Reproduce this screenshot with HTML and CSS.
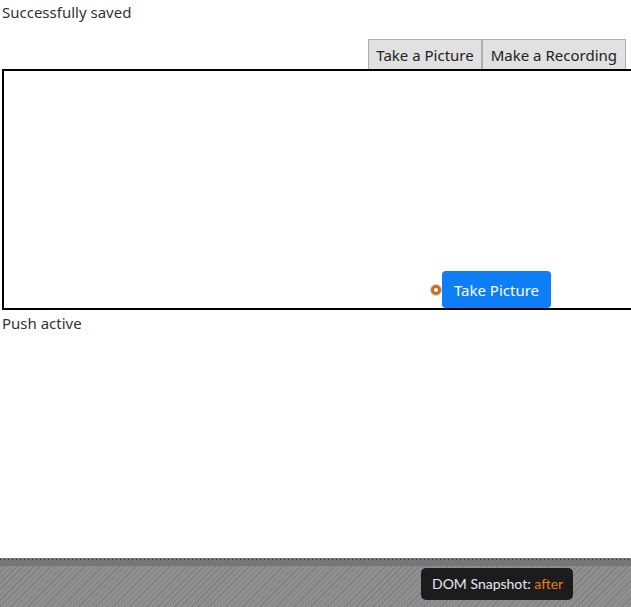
FILE: index.html
```html
<!DOCTYPE html>
<html>
<head>
<meta charset="utf-8">
<link rel="stylesheet" href="styles.css">
</head>
<body>
<div class="page">
  <div class="status">Successfully saved</div>
  <div class="toolbar">
    <button class="tool-btn">Take a Picture</button><button class="tool-btn">Make a Recording</button>
  </div>
  <div class="stage">
    <div class="capture">
      <span class="rec-dot"></span>
      <button class="take-btn">Take Picture</button>
    </div>
  </div>
  <div class="push">Push active</div>
</div>
<div class="footer">
  <div class="footer-band"></div>
  <div class="footer-body">
    <div class="badge">DOM Snapshot: <span class="badge-accent">after</span></div>
  </div>
</div>
</body>
</html>
```
FILE: styles.css
```css
html, body {
  margin: 0;
  padding: 0;
  height: 100%;
  overflow: hidden;
  background: #fff;
}
body {
  font-family: "Noto Sans", "Open Sans", sans-serif;
  font-size: 15px;
  color: #222;
  display: flex;
  flex-direction: column;
}
.page {
  flex: 1;
  padding: 0 0 0 2px;
}
.status {
  height: 24px;
  line-height: 24px;
  color: #333;
}
.toolbar {
  display: flex;
  justify-content: flex-end;
  padding-right: 5px;
  margin-top: 15px;
}
.tool-btn {
  font-family: inherit;
  font-size: 15px;
  color: #222;
  height: 30px;
  padding: 0 7px;
  margin: 0;
  background: #e1e1e1;
  border: 1px solid #adadad;
  border-bottom: none;
}
.tool-btn + .tool-btn {
  padding: 0 8px;
}
.stage {
  border: 2px solid #000;
  height: 237px;
  width: 100%;
  display: flex;
  align-items: flex-end;
  justify-content: flex-end;
}
.capture {
  display: flex;
  align-items: center;
  margin-right: 82px;
}
.rec-dot {
  width: 4px;
  height: 4px;
  border-radius: 50%;
  background: #fff;
  border: 3px solid #c8701e;
  box-shadow: 0 0 0 1px #ccc;
  margin-right: 1px;
}
.take-btn {
  font-family: inherit;
  font-size: 15px;
  color: #fff;
  background: #0d7ef5;
  border: none;
  border-radius: 4px;
  width: 109px;
  height: 37px;
  padding: 0;
}
.push {
  line-height: 22px;
  margin-top: 2px;
  color: #333;
}
.footer {
  height: 49px;
  display: flex;
  flex-direction: column;
}
.footer-band {
  height: 8px;
  background:
    repeating-linear-gradient(90deg, #333 0 1px, transparent 1px 4px) 0 1px / 100% 1px no-repeat,
    #767676;
}
.footer-body {
  flex: 1;
  background:
    repeating-linear-gradient(135deg, #808080 0 1px, #8f8f8f 1px 4px);
  display: flex;
  justify-content: flex-end;
  padding-right: 58px;
  padding-top: 2px;
}
.badge {
  background: #1c1c1e;
  color: #e8e8e8;
  border-radius: 5px;
  font-family: Lato, "Noto Sans", sans-serif;
  font-size: 14px;
  width: 152px;
  height: 32px;
  line-height: 32px;
  box-sizing: border-box;
  padding-left: 11px;
}
.badge-accent {
  color: #e27c1c;
}
```
